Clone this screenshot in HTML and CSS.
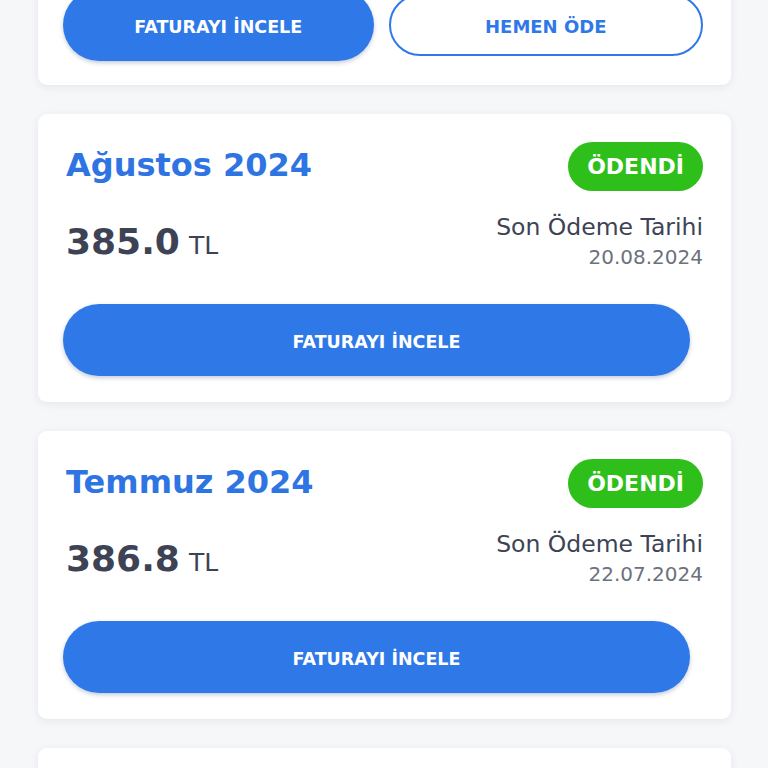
FILE: index.html
```html
<!DOCTYPE html>
<html lang="tr">
<head>
<meta charset="utf-8">
<title>Faturalar</title>
<link rel="stylesheet" href="styles.css">
</head>
<body>
<main class="page">
  <div class="list">
    <section class="card card-top">
      <div class="actions">
        <button class="btn btn-fill">FATURAYI İNCELE</button>
        <button class="btn btn-outline">HEMEN ÖDE</button>
      </div>
    </section>

    <section class="card">
      <div class="head">
        <h2 class="month">Ağustos 2024</h2>
        <span class="badge">ÖDENDİ</span>
      </div>
      <div class="info">
        <div class="amount"><span class="num">385.0</span><span class="cur">TL</span></div>
        <div class="due">
          <div class="due-label">Son Ödeme Tarihi</div>
          <div class="due-date">20.08.2024</div>
        </div>
      </div>
      <button class="btn btn-fill btn-wide">FATURAYI İNCELE</button>
    </section>

    <section class="card">
      <div class="head">
        <h2 class="month">Temmuz 2024</h2>
        <span class="badge">ÖDENDİ</span>
      </div>
      <div class="info">
        <div class="amount"><span class="num">386.8</span><span class="cur">TL</span></div>
        <div class="due">
          <div class="due-label">Son Ödeme Tarihi</div>
          <div class="due-date">22.07.2024</div>
        </div>
      </div>
      <button class="btn btn-fill btn-wide">FATURAYI İNCELE</button>
    </section>

    <section class="card card-next"></section>
  </div>
</main>
</body>
</html>
```

FILE: styles.css
```css
* { box-sizing: border-box; }
html, body { margin: 0; padding: 0; }
body {
  background: #f6f7f9;
  font-family: "DejaVu Sans", "Open Sans", sans-serif;
  color: #3d4354;
  overflow: hidden;
  height: 768px;
}
.page { padding: 0 37px 0 38px; }
.list {
  display: flex;
  flex-direction: column;
  gap: 29px;
  margin-top: -39px;
}
.card {
  background: #fff;
  border-radius: 9px;
  box-shadow: 0 2px 8px rgba(30, 40, 60, 0.08);
  padding: 28px 28px 26px 25px;
}
.card-top { padding-bottom: 24px; }
.card-next { min-height: 120px; }
.actions {
  display: flex;
  align-items: center;
  gap: 15px;
}
.actions .btn { flex: 1; }
.btn {
  height: 72px;
  border-radius: 36px;
  padding: 3px 0 0;
  font-family: inherit;
  font-weight: 700;
  font-size: 17.5px;
  cursor: pointer;
}
.btn-fill {
  background: #2f78e8;
  color: #fff;
  border: none;
  box-shadow: 0 2px 4px rgba(20, 50, 110, 0.25);
}
.btn-outline {
  height: 62px;
  background: #fff;
  color: #2f78e8;
  border: 2px solid #2f78e8;
  font-size: 18px;
}
.btn-wide {
  display: block;
  width: 627px;
  margin-top: 32px;
}
.head {
  display: flex;
  justify-content: space-between;
  align-items: center;
  height: 49px;
  padding-left: 3px;
}
.month {
  margin: -3px 0 0;
  font-size: 32px;
  font-weight: 700;
  color: #2e74e2;
}
.badge {
  background: #2fbf1b;
  color: #fff;
  font-weight: 700;
  font-size: 22px;
  height: 49px;
  line-height: 49px;
  padding: 0 19px;
  border-radius: 25px;
}
.info {
  display: flex;
  justify-content: space-between;
  align-items: center;
  margin-top: 21px;
  padding-left: 3px;
}
.amount { display: flex; align-items: baseline; gap: 9px; }
.num { font-size: 36px; font-weight: 700; line-height: 48px; color: #3d4354; }
.cur { font-size: 25px; color: #3d4354; }
.due { text-align: right; }
.due-label { font-size: 23.5px; line-height: 30px; color: #3d4354; }
.due-date { font-size: 20px; line-height: 30px; color: #6d717c; }
```
